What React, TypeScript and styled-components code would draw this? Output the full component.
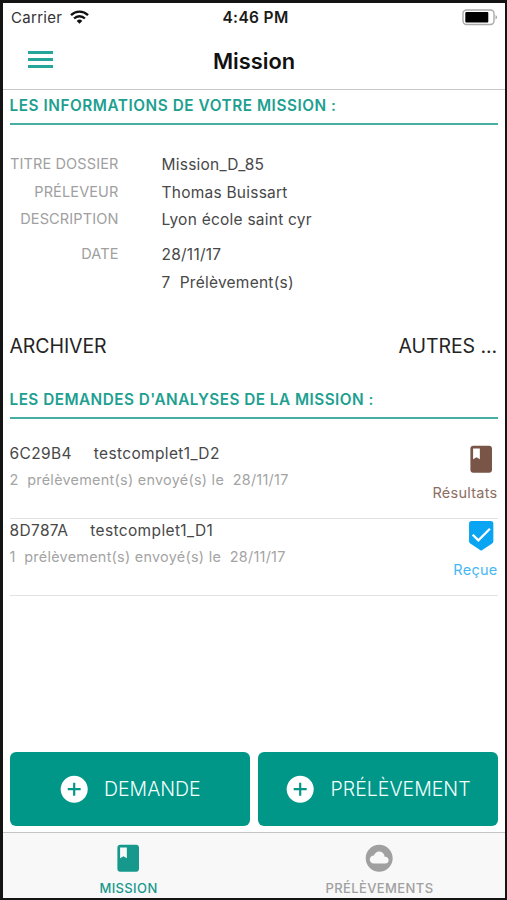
import React from "react";
import styled, { createGlobalStyle } from "styled-components";

const TEAL = "#009688";

const GlobalStyle = createGlobalStyle`
  *, *::before, *::after { box-sizing: border-box; }
  html, body { margin: 0; padding: 0; background: #141414; }
  body { font-family: Inter, "Liberation Sans", sans-serif; }
`;

const Screen = styled.div`
  width: 507px;
  height: 900px;
  border: 3px solid #141414;
  border-width: 3px 2px 2px 3px;
  background: #fff;
  display: flex;
  flex-direction: column;
  overflow: hidden;
  white-space: pre;
`;

const StatusBar = styled.div`
  height: 29px;
  flex: none;
  display: grid;
  grid-template-columns: 1fr auto 1fr;
  align-items: center;
  padding: 0 7px 0 8px;
  font-size: 15px;
  line-height: 29px;
  color: #333;
`;

const Carrier = styled.div`
  display: flex;
  align-items: center;
  gap: 8px;
  letter-spacing: 0.3px;
  svg { margin-top: -2px; }
`;

const Clock = styled.div`
  font-size: 15.5px;
  font-weight: 600;
  letter-spacing: 0.35px;
  color: #1a1a1a;
  padding-left: 2px;
`;

const Battery = styled.svg`
  justify-self: end;
  display: block;
  margin-top: -1px;
`;

const NavBar = styled.header`
  height: 58px;
  flex: none;
  display: grid;
  grid-template-columns: 80px 1fr 80px;
  align-items: center;
  border-bottom: 1px solid #c8c8c8;
`;

const MenuButton = styled.button`
  width: 25px;
  height: 17px;
  margin: -2px 0 0 25px;
  padding: 0;
  border: 0;
  background: none;
  display: flex;
  flex-direction: column;
  justify-content: space-between;
`;

const MenuLine = styled.span`
  height: 3px;
  background: #26a699;
`;

const Title = styled.h1`
  margin: 0;
  text-align: center;
  font-size: 21.8px;
  font-weight: 580;
  color: #111;
`;

const Content = styled.main`
  flex: 1;
  min-height: 0;
  padding: 0 7px 0 6.5px;
  display: flex;
  flex-direction: column;
`;

const SectionTitle = styled.h2<{ $spacing: number }>`
  margin: 0;
  height: 35px;
  flex: none;
  border-bottom: 2px solid #45afa3;
  font-size: 15.3px;
  line-height: 32px;
  font-weight: 600;
  letter-spacing: ${(p) => p.$spacing}px;
  color: #209f91;
`;

const Details = styled.dl`
  margin: 25px 0 0;
  height: 165px;
  flex: none;
  display: grid;
  grid-template-columns: 109px 1fr;
  grid-template-rows: 28px 27px 35px 28px 28px;
  column-gap: 43px;
`;

const Label = styled.dt`
  text-align: right;
  font-size: 14.5px;
  line-height: 28px;
  letter-spacing: 0.13px;
  color: #a0a0a0;
`;

const Value = styled.dd`
  margin: 0;
  grid-column: 2;
  font-size: 15.5px;
  line-height: 30px;
  letter-spacing: 0.24px;
  color: #484848;
`;

const Actions = styled.div`
  height: 69px;
  padding: 0 1px 7px 0;
  flex: none;
  display: flex;
  justify-content: space-between;
  align-items: center;
`;

const TextButton = styled.button`
  padding: 0;
  border: 0;
  background: none;
  font: 400 19.5px Inter, sans-serif;
  letter-spacing: -0.08px;
  color: #242424;
`;

const Requests = styled.ul`
  list-style: none;
  margin: 0;
  padding: 23px 0 0;
`;

const Request = styled.li`
  height: 77px;
  display: flex;
  justify-content: space-between;
  border-bottom: 1px solid #e2e2e2;
`;

const RequestName = styled.div`
  display: flex;
  gap: 22px;
  font-size: 15.5px;
  line-height: 24px;
  letter-spacing: 0.35px;
  color: #484848;
`;

const RequestInfo = styled.div`
  margin-top: 2px;
  font-size: 14.4px;
  line-height: 24px;
  letter-spacing: 0.27px;
  color: #a4a4a4;
`;

const Status = styled.div<{ $color: string }>`
  display: flex;
  flex-direction: column;
  align-items: flex-end;
  color: ${(p) => p.$color};
  padding: 1px 0.5px 0 0;
  gap: 7px;
  font-size: 14.5px;
  line-height: 22px;
  letter-spacing: 0.25px;
  svg { display: block; }
`;

const Footer = styled.div`
  flex: none;
  display: grid;
  grid-template-columns: 1fr 1fr;
  gap: 8px;
  height: 80px;
  padding: 0 7px 6px 6.5px;
`;

const AddButton = styled.button`
  border: 0;
  border-radius: 6px;
  background: ${TEAL};
  padding: 0 1px 0 0;
  display: flex;
  align-items: center;
  justify-content: center;
  gap: 14px;
  font: 300 19.5px Inter, sans-serif;
  letter-spacing: 0;
  color: #f2fffd;
`;

const TabBar = styled.nav`
  flex: none;
  height: 66px;
  display: grid;
  grid-template-columns: 1fr 1fr;
  background: #f8f8f8;
  border-top: 1px solid #c4c4c4;
`;

const Tab = styled.div<{ $active?: boolean }>`
  display: flex;
  flex-direction: column;
  align-items: center;
  padding-top: 9px;
  font-size: 13px;
  line-height: 20px;
  font-weight: 500;
  letter-spacing: 0.38px;
  color: ${(p) => (p.$active ? "#16998c" : "#a0a0a0")};
  svg { display: block; margin-bottom: 4px; }
`;

const BookIcon = () => (
  <svg width="32.4" height="32.4" viewBox="0 0 24 24" fill="currentColor">
    <path d="M18 2H6c-1.1 0-2 .9-2 2v16c0 1.1.9 2 2 2h12c1.1 0 2-.9 2-2V4c0-1.1-.9-2-2-2zM6 4h5v8l-2.5-1.5L6 12V4z" />
  </svg>
);

const CheckBadgeIcon = () => (
  <svg width="32.4" height="32.4" viewBox="0 0 32 32">
    <path d="M6.500 1h19a2.500 2.500 0 0 1 2.500 2.500V21a2.500 2.500 0 0 1-1.200 2.200L16 30.500 5.200 23.200A2.500 2.500 0 0 1 4 21V3.500A2.500 2.500 0 0 1 6.500 1z" fill="#0aa5f2" />
    <path d="M7.600 14.500l5.600 5.600L24.600 8.700" fill="none" stroke="#fff" strokeWidth="2.200" />
  </svg>
);

const CloudIcon = () => (
  <svg width="32.4" height="32.4" viewBox="0 0 24 24" fill="currentColor">
    <path d="M12 2C6.480 2 2 6.480 2 12s4.480 10 10 10 10-4.480 10-10S17.520 2 12 2zm4.500 14H8c-1.660 0-3-1.340-3-3s1.340-3 3-3l.14.010C8.580 8.280 10.130 7 12 7c2.210 0 4 1.790 4 4h.5c1.380 0 2.500 1.120 2.500 2.500S17.880 16 16.500 16z" />
  </svg>
);

const PlusIcon = () => (
  <svg width="32.4" height="32.4" viewBox="0 0 24 24">
    <circle cx="12" cy="12" r="10" fill="#fff" />
    <path d="M12 7.200v9.600M7.200 12h9.600" stroke={TEAL} strokeWidth="1.600" />
  </svg>
);

const WifiIcon = () => (
  <svg width="19" height="14" viewBox="0 0 19 14" fill="none" stroke="#111" strokeWidth="2.4">
    <path d="M1 5.100a12.200 12.200 0 0 1 17 0" />
    <path d="M4.100 8.500a7.700 7.700 0 0 1 10.800 0" />
    <path d="M9.500 13.700L6.700 10.900a4 4 0 0 1 5.600 0z" fill="#111" stroke="none" />
  </svg>
);

const requests = [
  { code: "6C29B4", name: "testcomplet1_D2", count: 2, status: "Résultats", color: "#8d6e63", icon: "book" },
  { code: "8D787A", name: "testcomplet1_D1", count: 1, status: "Reçue", color: "#48b8f2", icon: "check" },
];

const IconTint = styled.span`
  display: block;
  color: #795548;
`;

export default function App() {
  return (
    <>
      <GlobalStyle />
      <Screen>
        <StatusBar>
          <Carrier>
            Carrier
            <WifiIcon />
          </Carrier>
          <Clock>4:46 PM</Clock>
          <Battery width="36" height="17" viewBox="0 0 36 17">
            <rect x="1" y="1" width="31" height="14.5" rx="3.5" fill="#fff" stroke="#aaa" strokeWidth="1.4" />
            <rect x="3.3" y="3" width="23" height="10.6" rx="1" fill="#000" />
            <path d="M33.600 6v4.600a2.600 2.600 0 0 0 0-4.600z" fill="#999" />
          </Battery>
        </StatusBar>
        <NavBar>
          <MenuButton aria-label="Menu">
            <MenuLine />
            <MenuLine />
            <MenuLine />
          </MenuButton>
          <Title>Mission</Title>
        </NavBar>
        <Content>
          <SectionTitle $spacing={0.56}>LES INFORMATIONS DE VOTRE MISSION :</SectionTitle>
          <Details>
            <Label>TITRE DOSSIER</Label>
            <Value>Mission_D_85</Value>
            <Label>PRÉLEVEUR</Label>
            <Value>Thomas Buissart</Value>
            <Label>DESCRIPTION</Label>
            <Value>Lyon école saint cyr</Value>
            <Label>DATE</Label>
            <Value>28/11/17</Value>
            <Value>7  Prélèvement(s)</Value>
          </Details>
          <Actions>
            <TextButton>ARCHIVER</TextButton>
            <TextButton>AUTRES ...</TextButton>
          </Actions>
          <SectionTitle $spacing={0.48}>LES DEMANDES D'ANALYSES DE LA MISSION :</SectionTitle>
          <Requests>
            {requests.map((r) => (
              <Request key={r.code}>
                <div>
                  <RequestName>
                    <span>{r.code}</span>
                    <span>{r.name}</span>
                  </RequestName>
                  <RequestInfo>{`${r.count}  prélèvement(s) envoyé(s) le  28/11/17`}</RequestInfo>
                </div>
                <Status $color={r.color}>
                  <IconTint>{r.icon === "book" ? <BookIcon /> : <CheckBadgeIcon />}</IconTint>
                  {r.status}
                </Status>
              </Request>
            ))}
          </Requests>
        </Content>
        <Footer>
          <AddButton>
            <PlusIcon />
            DEMANDE
          </AddButton>
          <AddButton>
            <PlusIcon />
            PRÉLÈVEMENT
          </AddButton>
        </Footer>
        <TabBar>
          <Tab $active>
            <BookIcon />
            MISSION
          </Tab>
          <Tab>
            <CloudIcon />
            PRÉLÈVEMENTS
          </Tab>
        </TabBar>
      </Screen>
    </>
  );
}
